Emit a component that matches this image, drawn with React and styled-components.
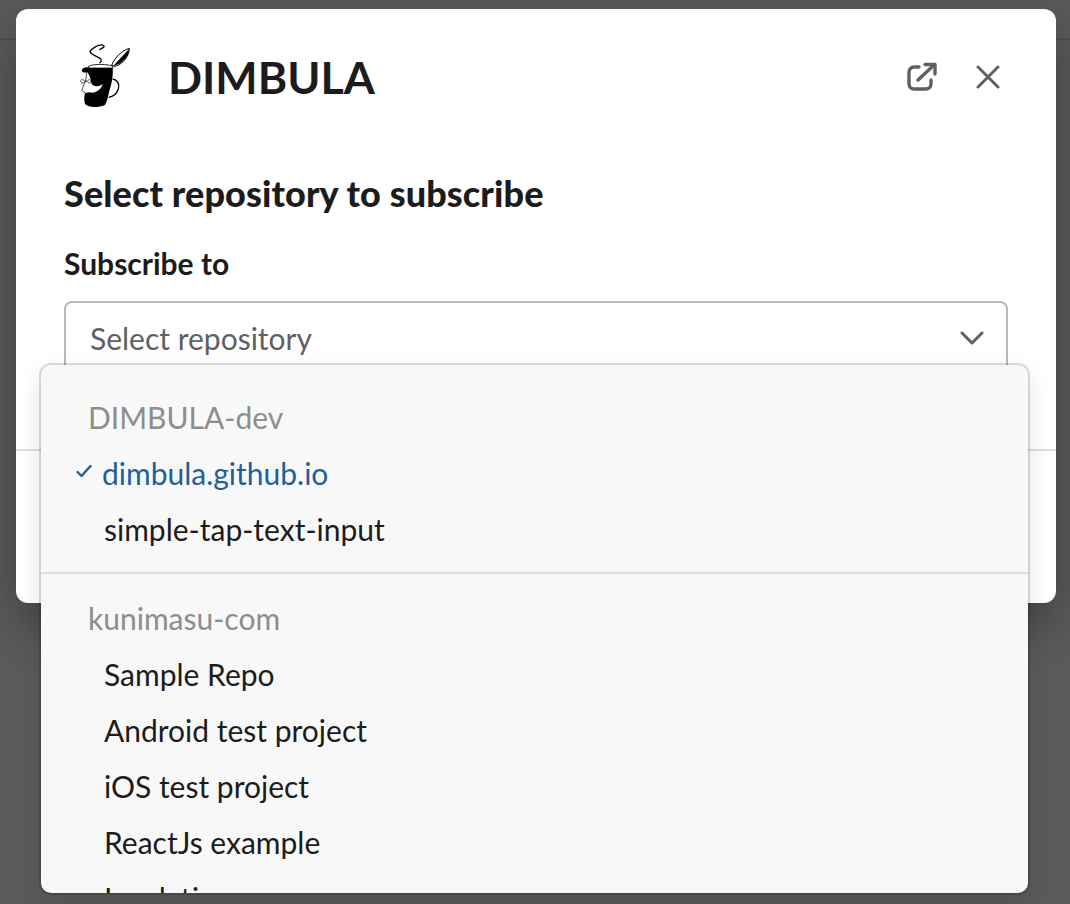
import React from "react";
import styled, { createGlobalStyle } from "styled-components";

const Global = createGlobalStyle`
  html, body { margin: 0; padding: 0; height: 904px; overflow: hidden; background: #5a5a5a; }
  * { box-sizing: border-box; }
  body { font-family: Lato, "Noto Sans", sans-serif; color: #1d1c1d; }
`;

const Page = styled.div`
  position: relative;
  width: 1070px;
  height: 904px;
  padding: 9px 14px 0 16px;
  overflow: hidden;
  background: #5a5a5a;
`;
const TopLine = styled.div`
  position: absolute;
  left: 0;
  right: 0;
  top: 38px;
  height: 2px;
  background: #4f4f4f;
`;
const Modal = styled.div`
  position: relative;
  width: 1040px;
  height: 594px;
  background: #fff;
  border-radius: 12px;
  box-shadow: 0 18px 48px rgba(0, 0, 0, 0.3);
`;
const Header = styled.div`
  display: flex;
  align-items: center;
  height: 135px;
  padding: 0 50px 0 48px;
`;
const LogoBox = styled.div`
  width: 72px;
  height: 72px;
  margin-right: 32px;
  flex: none;
`;
const AppName = styled.h1`
  margin: 0;
  flex: 1;
  font-size: 44.8px;
  font-weight: 700;
  line-height: 56px;
`;
const HeaderButton = styled.button`
  width: 36px;
  height: 36px;
  padding: 0;
  margin-left: ${(p) => p.$gap || 0}px;
  border: 0;
  background: none;
  display: flex;
  align-items: center;
  justify-content: center;
  color: #616061;
`;
const Body = styled.div`
  padding: 27px 48px 0;
`;
const Title = styled.h2`
  margin: 0;
  font-size: 36px;
  font-weight: 900;
  line-height: 44px;
  letter-spacing: 0.1px;
`;
const Label = styled.div`
  margin-top: 30px;
  font-size: 30px;
  font-weight: 700;
  line-height: 36px;
`;
const SelectBox = styled.div`
  margin-top: 20px;
  width: 944px;
  height: 76px;
  border: 2px solid #b9b9b9;
  border-radius: 8px;
  display: flex;
  align-items: center;
  justify-content: space-between;
  padding: 0 22px 2px 24px;
  font-size: 30px;
  color: #616061;
`;
const FooterRule = styled.div`
  position: absolute;
  left: 0;
  right: 0;
  top: 440px;
  height: 2px;
  background: #dddddd;
`;
const Menu = styled.div`
  position: absolute;
  left: 41px;
  top: 365px;
  width: 987px;
  height: 528px;
  background: #f8f8f8;
  border-radius: 10px;
  box-shadow: 0 0 0 2px rgba(0, 0, 0, 0.13), 0 8px 24px rgba(0, 0, 0, 0.12);
  overflow: hidden;
  padding-top: 24px;
`;
const GroupName = styled.div`
  height: 56px;
  line-height: 56px;
  padding-left: 47px;
  font-size: 30px;
  color: #8d8d8d;
`;
const Item = styled.div`
  position: relative;
  height: 56px;
  line-height: 56px;
  padding-left: ${(p) => (p.$selected ? 61 : 63)}px;
  font-size: 30px;
  color: ${(p) => (p.$selected ? "#1f5f9c" : "#1d1c1d")};
`;
const Check = styled.svg`
  position: absolute;
  left: 35px;
  top: 19px;
`;
const Divider = styled.div`
  height: 2px;
  margin: 15px 0 16px;
  background: #dddddd;
`;

const Logo = () => (
  <svg width="72" height="72" viewBox="12 36 216 216">
    <path d="M118 62C128 58 138 52 128 48C115 46 95 58 90 68C92 78 115 82 122 90C126 96 122 100 118 102" fill="none" stroke="#000" strokeWidth="4" />
    <path d="M155 108C165 85 185 65 208 58C208 80 190 105 165 112Z" fill="#fff" stroke="#000" strokeWidth="3" />
    <path d="M160 110C175 95 190 78 207 60C206 82 188 106 160 110Z" fill="#000" />
    <path d="M85 112C100 104 145 104 160 113L158 118H88Z" fill="#fff" stroke="#000" strokeWidth="2.500" />
    <path d="M65 125C68 115 78 113 88 116L158 116C160 140 155 165 148 185C145 200 142 215 135 228C110 238 85 235 75 225C72 215 72 200 75 192L90 190C105 195 125 180 128 165C115 175 100 172 95 165C92 150 88 135 80 128C76 132 68 132 65 125Z" fill="#000" />
    <path d="M158 150C172 152 180 165 175 180C170 195 160 203 146 205" fill="none" stroke="#000" strokeWidth="4" />
    <path d="M80 128L78 150L65 185L75 191" fill="none" stroke="#000" strokeWidth="2" />
    <path d="M74 156C68 150 62 151 62 157C62 163 68 164 74 158L82 158C87 164 92 163 92 157C92 151 87 150 82 156Z" fill="#fff" stroke="#000" strokeWidth="2" />
  </svg>
);

const ExternalIcon = () => (
  <svg width="30" height="30" viewBox="0 0 30 30" fill="none" stroke="currentColor" strokeWidth="3.400" strokeLinecap="round" strokeLinejoin="round">
    <path d="M12 5H7a5 5 0 0 0-5 5v12a5 5 0 0 0 5 5h12a5 5 0 0 0 5-5v-4" />
    <path d="M11 18 27 3" />
    <path d="M18 2.500h10V12" />
  </svg>
);
const CloseIcon = () => (
  <svg width="24" height="24" viewBox="0 0 24 24" fill="none" stroke="currentColor" strokeWidth="3" strokeLinecap="round">
    <path d="M2 2l20 20M22 2L2 22" />
  </svg>
);
const Chevron = () => (
  <svg width="24" height="14" viewBox="0 0 24 14" fill="none" stroke="#616061" strokeWidth="3" strokeLinecap="round" strokeLinejoin="round">
    <path d="M2 2l10 10L22 2" />
  </svg>
);

export default function App() {
  return (
    <Page>
      <Global />
      <TopLine />
      <Modal>
        <Header>
          <LogoBox><Logo /></LogoBox>
          <AppName>DIMBULA</AppName>
          <HeaderButton aria-label="Open"><ExternalIcon /></HeaderButton>
          <HeaderButton $gap={30} aria-label="Close"><CloseIcon /></HeaderButton>
        </Header>
        <Body>
          <Title>Select repository to subscribe</Title>
          <Label>Subscribe to</Label>
          <SelectBox>Select repository<Chevron /></SelectBox>
        </Body>
        <FooterRule />
      </Modal>
      <Menu>
        <GroupName>DIMBULA-dev</GroupName>
        <Item $selected>
          <Check width="16" height="14" viewBox="0 0 16 14" fill="none" stroke="#1f5f9c" strokeWidth="2.400" strokeLinecap="round" strokeLinejoin="round">
            <path d="M1.500 8l4 4L14.500 2" />
          </Check>
          dimbula.github.io
        </Item>
        <Item>simple-tap-text-input</Item>
        <Divider />
        <GroupName>kunimasu-com</GroupName>
        <Item>Sample Repo</Item>
        <Item>Android test project</Item>
        <Item>iOS test project</Item>
        <Item>ReactJs example</Item>
        <Item>Insulation</Item>
      </Menu>
    </Page>
  );
}
